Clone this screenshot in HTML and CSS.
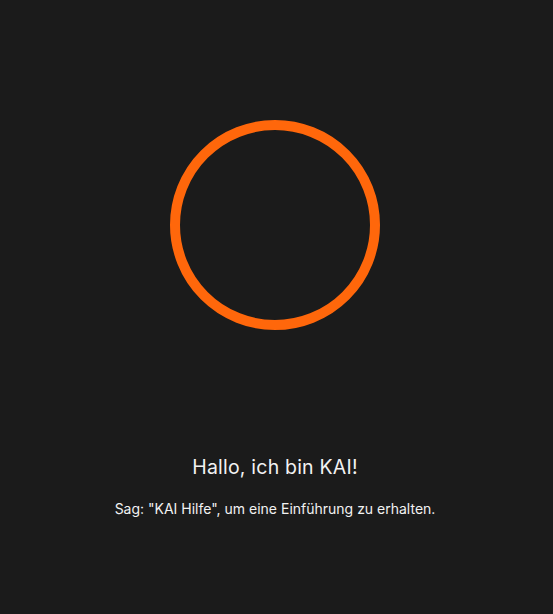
FILE: index.html
```html
<!DOCTYPE html>
<html lang="de">
<head>
<meta charset="utf-8">
<link rel="stylesheet" href="styles.css">
</head>
<body>
<main class="screen">
  <div class="orb"></div>
  <h1 class="title">Hallo, ich bin KAI!</h1>
  <p class="hint">Sag: "KAI Hilfe", um eine Einführung zu erhalten.</p>
</main>
</body>
</html>
```
FILE: styles.css
```css
html, body {
  margin: 0;
  padding: 0;
  background: #1b1b1b;
  height: 100%;
}
.screen {
  width: 550px;
  height: 614px;
  display: flex;
  flex-direction: column;
  align-items: center;
  font-family: Inter, "Noto Sans", sans-serif;
  color: #f2f2f2;
}
.orb {
  margin-top: 120px;
  width: 190px;
  height: 190px;
  border: 10px solid #ff670b;
  border-radius: 50%;
}
.title {
  margin: 125px 0 0;
  font-size: 19.5px;
  font-weight: 400;
  line-height: 24px;
  letter-spacing: 0.2px;
}
.hint {
  margin: 22px 0 0;
  font-size: 14px;
  line-height: 16px;
}
```
